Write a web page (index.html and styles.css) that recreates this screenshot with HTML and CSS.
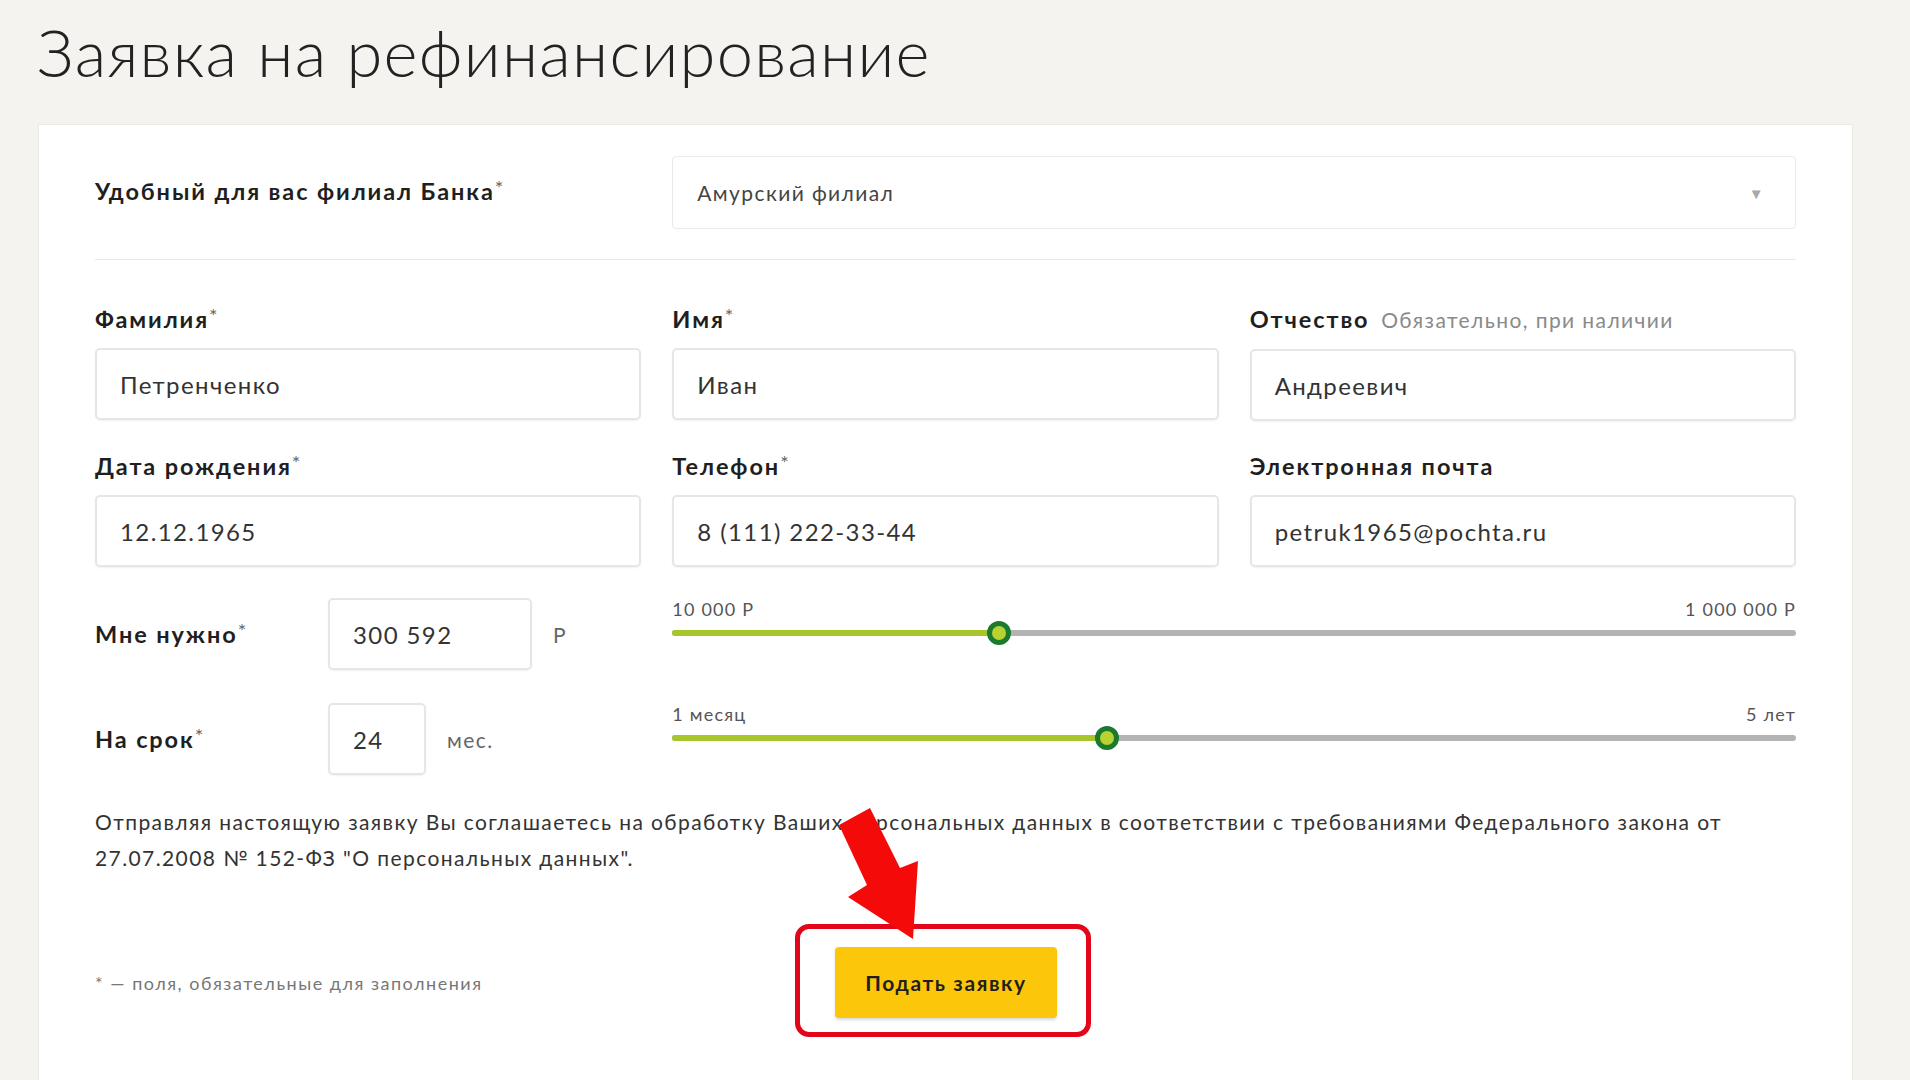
FILE: index.html
```html
<!DOCTYPE html>
<html lang="ru">
<head>
<meta charset="utf-8">
<title>Заявка на рефинансирование</title>
<link rel="stylesheet" href="styles.css">
</head>
<body>
<h1 class="title">Заявка на рефинансирование</h1>
<div class="card">
  <div class="grid branch-row">
    <div class="label branch-label">Удобный для вас филиал Банка<span class="ast">*</span></div>
    <div class="select span2">
      <span>Амурский филиал</span>
      <span class="caret">&#9660;</span>
    </div>
  </div>
  <div class="divider"></div>
  <div class="grid fields">
    <div class="field">
      <div class="label">Фамилия<span class="ast">*</span></div>
      <div class="input">Петренченко</div>
    </div>
    <div class="field">
      <div class="label">Имя<span class="ast">*</span></div>
      <div class="input">Иван</div>
    </div>
    <div class="field">
      <div class="label">Отчество <span class="hint">Обязательно, при наличии</span></div>
      <div class="input">Андреевич</div>
    </div>
    <div class="field">
      <div class="label">Дата рождения<span class="ast">*</span></div>
      <div class="input">12.12.1965</div>
    </div>
    <div class="field">
      <div class="label">Телефон<span class="ast">*</span></div>
      <div class="input">8 (111) 222-33-44</div>
    </div>
    <div class="field">
      <div class="label">Электронная почта</div>
      <div class="input">petruk1965@pochta.ru</div>
    </div>
  </div>
  <div class="grid range-row amount-row">
    <div class="range-left">
      <div class="label range-label">Мне нужно<span class="ast">*</span></div>
      <div class="input small amount">300 592</div>
      <div class="unit">Р</div>
    </div>
    <div class="slider span2">
      <div class="slider-labels"><span>10 000 Р</span><span>1 000 000 Р</span></div>
      <div class="track"><div class="fill" style="width: 29.1%"></div><div class="knob" style="left: 29.1%"></div></div>
    </div>
  </div>
  <div class="grid range-row term-row">
    <div class="range-left">
      <div class="label range-label">На срок<span class="ast">*</span></div>
      <div class="input small term">24</div>
      <div class="unit">мес.</div>
    </div>
    <div class="slider span2">
      <div class="slider-labels"><span>1 месяц</span><span>5 лет</span></div>
      <div class="track"><div class="fill" style="width: 38.7%"></div><div class="knob" style="left: 38.7%"></div></div>
    </div>
  </div>
  <p class="agreement">Отправляя настоящую заявку Вы соглашаетесь на обработку Ваших персональных данных в соответствии с требованиями Федерального закона от 27.07.2008 № 152-ФЗ "О персональных данных".</p>
  <div class="footer">
    <div class="footnote">* — поля, обязательные для заполнения</div>
    <div class="btn-wrap">
      <div class="highlight"></div>
      <button class="btn">Подать заявку</button>
    </div>
  </div>
</div>
<svg class="arrow" width="1910" height="1080" viewBox="0 0 1910 1080">
  <polygon points="870,808 900,868 918,861 913,939 848,897 867,885 839,825" fill="#f50a0a"/>
</svg>
</body>
</html>
```
FILE: styles.css
```css
html, body {
  margin: 0;
  padding: 0;
}
body {
  background: #f4f3ef;
  font-family: "Lato", "Open Sans", sans-serif;
  color: #1f1f1f;
  letter-spacing: 1.4px;
  width: 1910px;
  height: 1080px;
  overflow: hidden;
  position: relative;
}
.title {
  margin: 0 0 32px 37px;
  padding-top: 12px;
  font-weight: 300;
  font-size: 65px;
  line-height: 80px;
  color: #222;
  letter-spacing: 1.3px;
}
.card {
  margin-left: 38px;
  width: 1815px;
  box-sizing: border-box;
  background: #fff;
  border: 1px solid #ebe9e3;
  border-bottom: none;
  padding: 31px 56px 100px 56px;
  min-height: 1000px;
}
.grid {
  display: grid;
  grid-template-columns: repeat(3, 1fr);
  column-gap: 31px;
}
.span2 {
  grid-column: span 2;
}
.label {
  font-weight: 700;
  font-size: 23.5px;
  line-height: 30px;
  color: #1f1f1f;
  letter-spacing: 1.9px;
}
.ast {
  font-weight: 400;
  font-size: 20px;
  vertical-align: top;
  line-height: 22px;
  color: #666;
  letter-spacing: 0;
}
.hint {
  font-weight: 400;
  font-size: 21px;
  color: #8a8a8a;
  margin-left: 4px;
  letter-spacing: 1.4px;
}
.branch-row {
  align-items: center;
}
.branch-label {
  align-self: start;
  margin-top: 20px;
}
.select {
  height: 73px;
  box-sizing: border-box;
  border: 1px solid #e9e9e9;
  border-radius: 4px;
  display: flex;
  align-items: center;
  justify-content: space-between;
  padding: 0 30px 0 24px;
  font-size: 21px;
  color: #444;
}
.caret {
  font-size: 15px;
  color: #a9a9a9;
}
.divider {
  height: 1px;
  background: #e7e7e7;
  margin: 30px 0 44px 0;
}
.fields {
  row-gap: 30px;
}
.field .label {
  margin-bottom: 14px;
}
.input {
  height: 72px;
  box-sizing: border-box;
  border: 2px solid #e6e6e6;
  border-radius: 5px;
  box-shadow: 0 1px 2px rgba(0,0,0,0.06);
  display: flex;
  align-items: center;
  padding-left: 23px;
  font-size: 24px;
  color: #333;
}
.range-row {
  align-items: center;
}
.amount-row {
  margin-top: 31px;
}
.term-row {
  margin-top: 33px;
}
.range-left {
  display: flex;
  align-items: center;
}
.range-label {
  width: 233px;
  flex: none;
}
.input.small {
  flex: none;
}
.amount {
  width: 204px;
}
.term {
  width: 98px;
}
.unit {
  margin-left: 21px;
  font-size: 21px;
  color: #666;
}
.slider {
  display: flex;
  flex-direction: column;
  align-self: start;
}
.slider-labels {
  display: flex;
  justify-content: space-between;
  font-size: 18px;
  line-height: 22px;
  color: #555;
  letter-spacing: 1.2px;
}
.track {
  position: relative;
  height: 6px;
  border-radius: 3px;
  background: #b3b3b3;
  margin-top: 10px;
}
.fill {
  height: 100%;
  border-radius: 3px;
  background: #a6c62c;
}
.knob {
  position: absolute;
  top: 50%;
  width: 24px;
  height: 24px;
  box-sizing: border-box;
  border-radius: 50%;
  border: 5px solid #1c7a2f;
  background: #b8d232;
  transform: translate(-50%, -50%);
}
.agreement {
  margin: 29px 0 0 0;
  font-size: 21px;
  line-height: 36px;
  color: #333;
}
.footer {
  display: flex;
  align-items: center;
  margin-top: 71px;
}
.footnote {
  width: 740px;
  flex: none;
  font-size: 18px;
  color: #777;
  letter-spacing: 1.5px;
}
.btn-wrap {
  position: relative;
}
.highlight {
  position: absolute;
  left: -40px;
  top: -23px;
  right: -34px;
  bottom: -19px;
  border: 5px solid #e3061a;
  border-radius: 14px;
}
.btn {
  position: relative;
  width: 222px;
  height: 71px;
  border: none;
  border-radius: 4px;
  background: #fcc60b;
  box-shadow: 0 2px 3px rgba(0,0,0,0.15);
  font-family: "Lato", "Open Sans", sans-serif;
  font-weight: 700;
  font-size: 21px;
  letter-spacing: 1.6px;
  color: #1f1f1f;
}
.arrow {
  position: absolute;
  left: 0;
  top: 0;
  pointer-events: none;
}
```
